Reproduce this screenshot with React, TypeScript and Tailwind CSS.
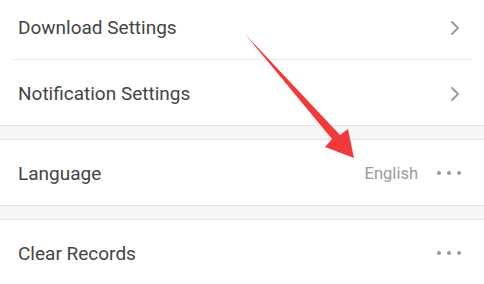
type Row = { label: string; value?: string; trailing: "chevron" | "dots"; divider?: boolean };

const GROUPS: Row[][] = [
  [
    { label: "Download Settings", trailing: "chevron", divider: true },
    { label: "Notification Settings", trailing: "chevron" },
  ],
  [{ label: "Language", value: "English", trailing: "dots" }],
  [{ label: "Clear Records", trailing: "dots" }],
];

function Dots() {
  return (
    <div className="-mt-[3px] flex items-center gap-[6px]">
      <span className="h-[4px] w-[4px] rounded-full bg-[#9a9a9a]" />
      <span className="h-[4px] w-[4px] rounded-full bg-[#9a9a9a]" />
      <span className="h-[4px] w-[4px] rounded-full bg-[#9a9a9a]" />
    </div>
  );
}

function Chevron() {
  return (
    <svg width="10" height="16" viewBox="0 0 10 16" className="mr-[1px]" aria-hidden>
      <polyline
        points="2,2 8,8 2,14"
        fill="none"
        stroke="#9a9a9a"
        strokeWidth="1.9"
        strokeLinecap="round"
        strokeLinejoin="round"
      />
    </svg>
  );
}

function SettingRow({ row }: { row: Row }) {
  return (
    <div className="flex h-[65px] items-center pl-[18px] pr-[23px] pt-[3px]">
      <span className="flex-1 text-[19px] text-[#444]">{row.label}</span>
      {row.value ? <span className="mr-[19px] text-[16.5px] text-[#9a9a9a]">{row.value}</span> : null}
      {row.trailing === "chevron" ? <Chevron /> : <Dots />}
    </div>
  );
}

export default function App() {
  return (
    <div
      className="relative h-[284px] w-[484px] overflow-hidden bg-white"
      style={{ fontFamily: "Roboto, 'Noto Sans', sans-serif" }}
    >
      <div className="-mt-[6px]">
        {GROUPS.map((group, gi) => (
          <div key={gi}>
            {gi > 0 ? <div className="h-[15px] border-y border-[#e4e4e4] bg-[#f6f6f6]" /> : null}
            {group.map((row) => (
              <div key={row.label}>
                <SettingRow row={row} />
                {row.divider ? <div className="ml-[12px] mr-[12px] h-px bg-[#ececec]" /> : null}
              </div>
            ))}
          </div>
        ))}
      </div>

      <svg className="pointer-events-none absolute left-0 top-0" width="484" height="284" aria-hidden>
        <polygon points="245,34 332,139 325,147 354,158 348,129 340,135" fill="#f23a3a" />
      </svg>
    </div>
  );
}
